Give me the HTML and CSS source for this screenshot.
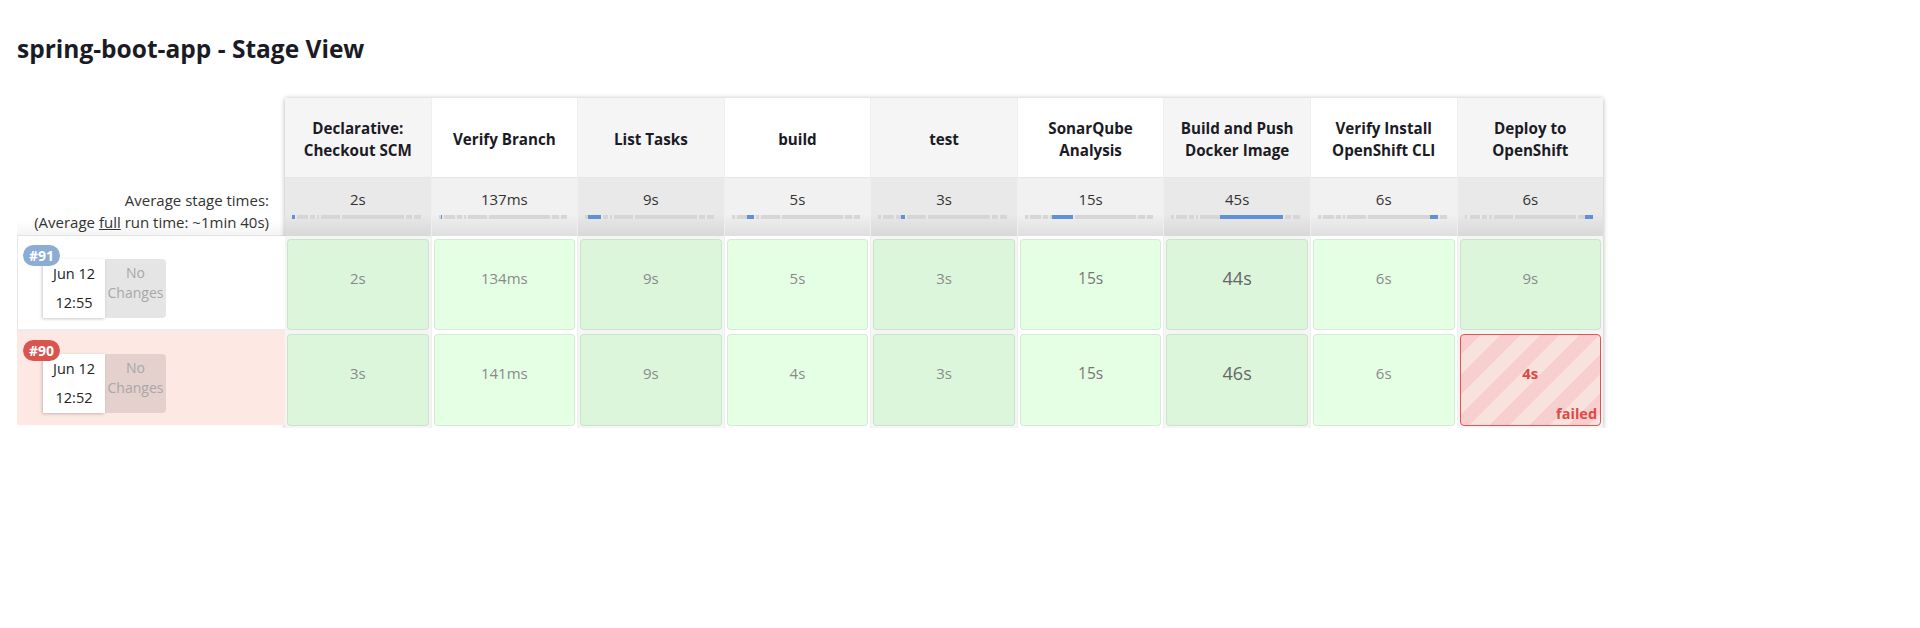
FILE: index.html
```html
<!DOCTYPE html>
<html lang="en">
<head>
<meta charset="utf-8">
<title>spring-boot-app - Stage View</title>
<link rel="stylesheet" href="styles.css">
</head>
<body>
<div class="page">
  <h2 class="title">spring-boot-app - Stage View</h2>
  <div class="stage-view">
    <div class="runs">
      <div class="runs-head"></div>
      <div class="avg-label">Average stage times:<br>(Average <u>full</u> run time: ~1min 40s)</div>
      <div class="run run-success">
        <span class="badge badge-success">#91</span>
        <div class="run-info">
          <div class="run-date">Jun 12<br>12:55</div>
          <div class="run-changes">No<br>Changes</div>
        </div>
      </div>
      <div class="run run-failed">
        <span class="badge badge-failed">#90</span>
        <div class="run-info">
          <div class="run-date">Jun 12<br>12:52</div>
          <div class="run-changes">No<br>Changes</div>
        </div>
      </div>
    </div>

    <div class="stages">
      <div class="stage">
        <div class="stage-name">Declarative: Checkout SCM</div>
        <div class="stage-avg">2s
          <div class="bar"><span class="seg on" style="flex-grow:2"></span><span class="seg" style="flex-grow:0.137"></span><span class="seg" style="flex-grow:9"></span><span class="seg" style="flex-grow:5"></span><span class="seg" style="flex-grow:3"></span><span class="seg" style="flex-grow:15"></span><span class="seg" style="flex-grow:45"></span><span class="seg" style="flex-grow:6"></span><span class="seg" style="flex-grow:6"></span></div>
        </div>
        <div class="stage-cell first"><div class="box success">2s</div></div>
        <div class="stage-cell"><div class="box success">3s</div></div>
      </div>
      <div class="stage">
        <div class="stage-name">Verify Branch</div>
        <div class="stage-avg">137ms
          <div class="bar"><span class="seg" style="flex-grow:2"></span><span class="seg on" style="flex-grow:0.137"></span><span class="seg" style="flex-grow:9"></span><span class="seg" style="flex-grow:5"></span><span class="seg" style="flex-grow:3"></span><span class="seg" style="flex-grow:15"></span><span class="seg" style="flex-grow:45"></span><span class="seg" style="flex-grow:6"></span><span class="seg" style="flex-grow:6"></span></div>
        </div>
        <div class="stage-cell first"><div class="box success">134ms</div></div>
        <div class="stage-cell"><div class="box success">141ms</div></div>
      </div>
      <div class="stage">
        <div class="stage-name">List Tasks</div>
        <div class="stage-avg">9s
          <div class="bar"><span class="seg" style="flex-grow:2"></span><span class="seg" style="flex-grow:0.137"></span><span class="seg on" style="flex-grow:9"></span><span class="seg" style="flex-grow:5"></span><span class="seg" style="flex-grow:3"></span><span class="seg" style="flex-grow:15"></span><span class="seg" style="flex-grow:45"></span><span class="seg" style="flex-grow:6"></span><span class="seg" style="flex-grow:6"></span></div>
        </div>
        <div class="stage-cell first"><div class="box success">9s</div></div>
        <div class="stage-cell"><div class="box success">9s</div></div>
      </div>
      <div class="stage">
        <div class="stage-name">build</div>
        <div class="stage-avg">5s
          <div class="bar"><span class="seg" style="flex-grow:2"></span><span class="seg" style="flex-grow:0.137"></span><span class="seg" style="flex-grow:9"></span><span class="seg on" style="flex-grow:5"></span><span class="seg" style="flex-grow:3"></span><span class="seg" style="flex-grow:15"></span><span class="seg" style="flex-grow:45"></span><span class="seg" style="flex-grow:6"></span><span class="seg" style="flex-grow:6"></span></div>
        </div>
        <div class="stage-cell first"><div class="box success">5s</div></div>
        <div class="stage-cell"><div class="box success">4s</div></div>
      </div>
      <div class="stage">
        <div class="stage-name">test</div>
        <div class="stage-avg">3s
          <div class="bar"><span class="seg" style="flex-grow:2"></span><span class="seg" style="flex-grow:0.137"></span><span class="seg" style="flex-grow:9"></span><span class="seg" style="flex-grow:5"></span><span class="seg on" style="flex-grow:3"></span><span class="seg" style="flex-grow:15"></span><span class="seg" style="flex-grow:45"></span><span class="seg" style="flex-grow:6"></span><span class="seg" style="flex-grow:6"></span></div>
        </div>
        <div class="stage-cell first"><div class="box success">3s</div></div>
        <div class="stage-cell"><div class="box success">3s</div></div>
      </div>
      <div class="stage">
        <div class="stage-name">SonarQube Analysis</div>
        <div class="stage-avg">15s
          <div class="bar"><span class="seg" style="flex-grow:2"></span><span class="seg" style="flex-grow:0.137"></span><span class="seg" style="flex-grow:9"></span><span class="seg" style="flex-grow:5"></span><span class="seg" style="flex-grow:3"></span><span class="seg on" style="flex-grow:15"></span><span class="seg" style="flex-grow:45"></span><span class="seg" style="flex-grow:6"></span><span class="seg" style="flex-grow:6"></span></div>
        </div>
        <div class="stage-cell first"><div class="box success mid">15s</div></div>
        <div class="stage-cell"><div class="box success mid">15s</div></div>
      </div>
      <div class="stage">
        <div class="stage-name">Build and Push Docker Image</div>
        <div class="stage-avg">45s
          <div class="bar"><span class="seg" style="flex-grow:2"></span><span class="seg" style="flex-grow:0.137"></span><span class="seg" style="flex-grow:9"></span><span class="seg" style="flex-grow:5"></span><span class="seg" style="flex-grow:3"></span><span class="seg" style="flex-grow:15"></span><span class="seg on" style="flex-grow:45"></span><span class="seg" style="flex-grow:6"></span><span class="seg" style="flex-grow:6"></span></div>
        </div>
        <div class="stage-cell first"><div class="box success long">44s</div></div>
        <div class="stage-cell"><div class="box success long">46s</div></div>
      </div>
      <div class="stage">
        <div class="stage-name">Verify Install OpenShift CLI</div>
        <div class="stage-avg">6s
          <div class="bar"><span class="seg" style="flex-grow:2"></span><span class="seg" style="flex-grow:0.137"></span><span class="seg" style="flex-grow:9"></span><span class="seg" style="flex-grow:5"></span><span class="seg" style="flex-grow:3"></span><span class="seg" style="flex-grow:15"></span><span class="seg" style="flex-grow:45"></span><span class="seg on" style="flex-grow:6"></span><span class="seg" style="flex-grow:6"></span></div>
        </div>
        <div class="stage-cell first"><div class="box success">6s</div></div>
        <div class="stage-cell"><div class="box success">6s</div></div>
      </div>
      <div class="stage">
        <div class="stage-name">Deploy to OpenShift</div>
        <div class="stage-avg">6s
          <div class="bar"><span class="seg" style="flex-grow:2"></span><span class="seg" style="flex-grow:0.137"></span><span class="seg" style="flex-grow:9"></span><span class="seg" style="flex-grow:5"></span><span class="seg" style="flex-grow:3"></span><span class="seg" style="flex-grow:15"></span><span class="seg" style="flex-grow:45"></span><span class="seg" style="flex-grow:6"></span><span class="seg on" style="flex-grow:6"></span></div>
        </div>
        <div class="stage-cell first"><div class="box success">9s</div></div>
        <div class="stage-cell"><div class="box failed"><span class="fail-time">4s</span><span class="fail-label">failed</span></div></div>
      </div>
    </div>
  </div>
</div>
</body>
</html>
```

FILE: styles.css
```css
* { box-sizing: border-box; }

body {
  margin: 0;
  background: #fff;
  color: #333;
  font-family: "Open Sans", "Noto Sans", "Liberation Sans", sans-serif;
  font-size: 14px;
}

.page {
  padding: 33px 0 0 17px;
}

.title {
  margin: 0 0 33px;
  font-size: 24.5px;
  line-height: 32px;
  font-weight: 700;
  color: #1b1b25;
}

.stage-view {
  display: flex;
  align-items: flex-start;
}

/* left column: runs */
.runs {
  width: 268px;
  flex: none;
}

.runs-head { height: 79px; }

.avg-label {
  height: 59px;
  padding: 12px 16px 0 0;
  text-align: right;
  line-height: 22px;
  font-size: 15px;
  color: #333;
  background: linear-gradient(to bottom, #fff 0%, #fff 75%, #f4f4f4 100%);
  border-bottom: 1px solid #e2e2e2;
}

.run {
  position: relative;
  border-left: 1px solid #e8e8e8;
}

.run-success {
  height: 95px;
  background: #fff;
  border-bottom: 2px solid #ececec;
}

.run-failed {
  height: 94px;
  background: #fee8e4;
  border-left-color: #fee8e4;
}

.badge {
  position: absolute;
  left: 5px;
  top: 9px;
  z-index: 2;
  height: 21px;
  padding: 0 6px;
  border-radius: 11px;
  color: #fff;
  font-weight: 700;
  font-size: 14px;
  line-height: 21px;
}

.badge-success { background: #8badd5; }
.badge-failed { background: #d9534f; }

.run-info {
  display: flex;
  padding: 23px 0 0 25px;
}

.run-date {
  width: 62px;
  height: 59px;
  background: #fff;
  text-align: center;
  line-height: 29px;
  font-size: 14.5px;
  color: #222;
  box-shadow: -1px 1px 3px rgba(0, 0, 0, 0.22);
}

.run-changes {
  width: 61px;
  height: 59px;
  padding-top: 4px;
  background: rgba(0, 0, 0, 0.1);
  border-radius: 0 4px 4px 0;
  text-align: center;
  line-height: 20px;
  font-size: 14px;
  color: #a8a8a8;
}

/* stage table */
.stages {
  display: flex;
  width: 1318px;
  flex: none;
  box-shadow: 0 0 5px rgba(0, 0, 0, 0.2), 0 2px 5px rgba(0, 0, 0, 0.12);
}

.stage {
  flex: 1 1 0;
  min-width: 0;
  background: #fff;
  border-left: 1px solid #efefef;
}

.stage:first-child { border-left: 0; }

.stage:nth-child(odd) { background: #f5f5f5; }

.stage-name {
  height: 79px;
  display: flex;
  align-items: center;
  justify-content: center;
  padding: 3px 8px 0;
  text-align: center;
  font-weight: 700;
  font-size: 15.2px;
  line-height: 22.5px;
  color: #1b1b25;
}

.stage-avg {
  height: 59px;
  padding-top: 11px;
  text-align: center;
  line-height: 20px;
  font-size: 15px;
  color: #333;
  background: linear-gradient(to bottom, #f1f1f1 0%, #f1f1f1 62%, #dedede 100%);
  border-top: 1px solid #e6e6e6;
}

.stage:nth-child(odd) .stage-avg {
  background: linear-gradient(to bottom, #e9e9e9 0%, #e9e9e9 62%, #d8d8d8 100%);
}

.bar {
  display: flex;
  height: 4px;
  margin: 6px 10px 0 7px;
  background: #d9d9d9;
}

.seg {
  flex-basis: 0;
  min-width: 0;
  height: 4px;
  background: #d6d6d6;
  box-shadow: inset 2px 0 0 #e9e9e9;
}

.seg:first-child { box-shadow: none; }

.seg.on {
  background: #5f91d8;
  box-shadow: none;
  min-width: 1px;
}

.stage-cell {
  height: 96px;
  padding: 2px;
}

.stage-cell.first { padding-top: 3px; }

.box {
  position: relative;
  height: 100%;
  border: 1px solid rgba(0, 0, 0, 0.08);
  border-radius: 4px;
  padding-top: 28px;
  text-align: center;
  line-height: 20px;
  font-size: 15px;
  color: #8a8a8a;
}

.box.success { background: rgba(0, 255, 0, 0.1); }

.box.mid { font-size: 15.5px; color: #777; }

.box.long { font-size: 18px; color: #666; }

.box.failed {
  border: 1px solid #e15454;
  background: repeating-linear-gradient(135deg, #f7cfcf 0 14px, #f7e2de 14px 28px);
  color: #e04848;
  font-weight: 700;
}

.fail-label {
  position: absolute;
  right: 3px;
  bottom: 2px;
  font-size: 14.5px;
  line-height: 18px;
}
```
